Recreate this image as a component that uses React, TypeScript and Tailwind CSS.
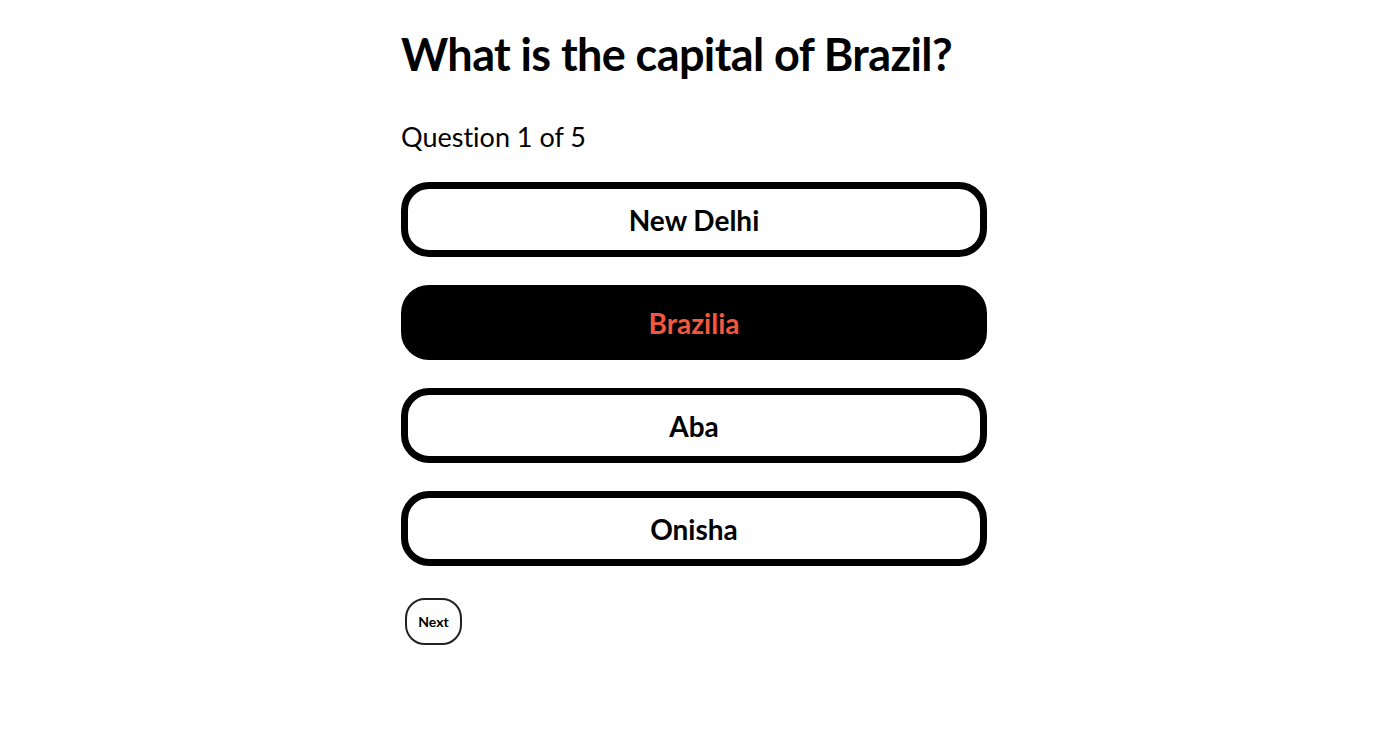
const options = ['New Delhi', 'Brazilia', 'Aba', 'Onisha'];

export default function App() {
  const selected = 'Brazilia';

  return (
    <div className="min-h-screen bg-white font-['Lato',sans-serif] text-black [font-variant-ligatures:none]">
      <div className="ml-[401px] w-[586px] pt-[24px]">
        <h1 className="text-[45px] leading-[60px] font-bold tracking-[-0.6px]">
          What is the capital of Brazil?
        </h1>
        <p className="mt-[36px] text-[27px] leading-[34px]">Question 1 of 5</p>

        <div className="mt-[28px] flex flex-col gap-[28px]">
          {options.map((opt) => {
            const active = opt === selected;
            return (
              <button
                key={opt}
                className={
                  active
                    ? 'h-[75px] w-full rounded-[28px] border-[7px] border-black bg-black text-[28px] font-bold text-[#f4573f]'
                    : 'h-[75px] w-full rounded-[28px] border-[7px] border-black bg-white text-[28px] font-bold text-black'
                }
              >
                {opt}
              </button>
            );
          })}
        </div>

        <button className="ml-[4px] mt-[32px] h-[47px] w-[57px] rounded-[20px] border-2 border-[#222] bg-white text-[14px] font-bold">
          Next
        </button>
      </div>
    </div>
  );
}
